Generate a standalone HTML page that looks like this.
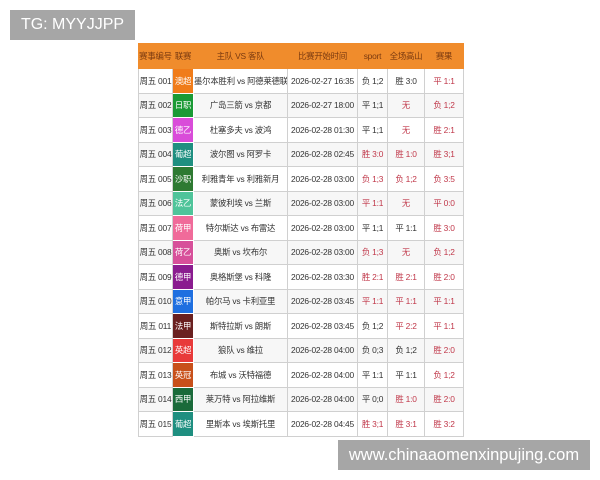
<!DOCTYPE html>
<html><head><meta charset="utf-8"><style>
body{margin:0;width:600px;height:480px;background:#fff;position:relative;overflow:hidden;font-family:"Liberation Sans","Noto Sans CJK SC",sans-serif}
.b1{position:absolute;left:10px;top:10px;width:125px;height:30px;background:#a6a6a6;color:#fff;font-size:16px;line-height:30px;text-align:center}
.b2{position:absolute;left:338px;top:440px;width:252px;height:30px;background:#a6a6a6;color:#fff;font-size:16.5px;line-height:30px;text-align:center}
table{position:absolute;left:138px;top:43px;width:325px;border-collapse:collapse;font-size:8.4px;letter-spacing:-0.2px;color:#333;table-layout:fixed}
td,th{border:1px solid #d0d0d0;padding:0;text-align:center;white-space:nowrap;overflow:hidden;height:23.5px}
th{background:#f08c2c;color:#7a3a10;font-weight:normal;height:24px;border-color:#f08c2c}
tr:nth-child(odd) td{background:#f7f7f7}
td.l{color:#fff;border-color:transparent}
.r{color:#c0384a}
</style></head><body>
<div class="b1">TG: MYYJJPP</div>
<table>
<colgroup><col style="width:34px"><col style="width:21px"><col style="width:94px"><col style="width:70px"><col style="width:30px"><col style="width:37px"><col style="width:39px"></colgroup>
<tr><th>赛事编号</th><th>联赛</th><th>主队 VS 客队</th><th>比赛开始时间</th><th>sport</th><th>全场高山</th><th>赛果</th></tr>
<tr><td>周五 001</td><td class="l" style="background:#f07c1a">澳超</td><td>墨尔本胜利 vs 阿德莱德联</td><td>2026-02-27 16:35</td><td>负 1;2</td><td>胜 3:0</td><td class="r">平 1:1</td></tr>
<tr><td>周五 002</td><td class="l" style="background:#1a9a35">日职</td><td>广岛三箭 vs 京都</td><td>2026-02-27 18:00</td><td>平 1;1</td><td class="r">无</td><td class="r">负 1;2</td></tr>
<tr><td>周五 003</td><td class="l" style="background:#d94cd9">德乙</td><td>杜塞多夫 vs 波鸿</td><td>2026-02-28 01:30</td><td>平 1;1</td><td class="r">无</td><td class="r">胜 2:1</td></tr>
<tr><td>周五 004</td><td class="l" style="background:#1f8f80">葡超</td><td>波尔图 vs 阿罗卡</td><td>2026-02-28 02:45</td><td class="r">胜 3:0</td><td class="r">胜 1:0</td><td class="r">胜 3;1</td></tr>
<tr><td>周五 005</td><td class="l" style="background:#2e7a32">沙职</td><td>利雅青年 vs 利雅新月</td><td>2026-02-28 03:00</td><td class="r">负 1;3</td><td class="r">负 1;2</td><td class="r">负 3:5</td></tr>
<tr><td>周五 006</td><td class="l" style="background:#4fc49a">法乙</td><td>蒙彼利埃 vs 兰斯</td><td>2026-02-28 03:00</td><td class="r">平 1:1</td><td class="r">无</td><td class="r">平 0:0</td></tr>
<tr><td>周五 007</td><td class="l" style="background:#f06b9a">荷甲</td><td>特尔斯达 vs 布雷达</td><td>2026-02-28 03:00</td><td>平 1;1</td><td>平 1:1</td><td class="r">胜 3:0</td></tr>
<tr><td>周五 008</td><td class="l" style="background:#d7509a">荷乙</td><td>奥斯 vs 坎布尔</td><td>2026-02-28 03:00</td><td class="r">负 1;3</td><td class="r">无</td><td class="r">负 1;2</td></tr>
<tr><td>周五 009</td><td class="l" style="background:#8a1c8f">德甲</td><td>奥格斯堡 vs 科隆</td><td>2026-02-28 03:30</td><td class="r">胜 2:1</td><td class="r">胜 2:1</td><td class="r">胜 2:0</td></tr>
<tr><td>周五 010</td><td class="l" style="background:#1f6fe0">意甲</td><td>帕尔马 vs 卡利亚里</td><td>2026-02-28 03:45</td><td class="r">平 1:1</td><td class="r">平 1:1</td><td class="r">平 1:1</td></tr>
<tr><td>周五 011</td><td class="l" style="background:#6a2020">法甲</td><td>斯特拉斯 vs 朗斯</td><td>2026-02-28 03:45</td><td>负 1;2</td><td class="r">平 2:2</td><td class="r">平 1:1</td></tr>
<tr><td>周五 012</td><td class="l" style="background:#e83a3a">英超</td><td>狼队 vs 维拉</td><td>2026-02-28 04:00</td><td>负 0;3</td><td>负 1;2</td><td class="r">胜 2:0</td></tr>
<tr><td>周五 013</td><td class="l" style="background:#c8501a">英冠</td><td>布城 vs 沃特福德</td><td>2026-02-28 04:00</td><td>平 1:1</td><td>平 1:1</td><td class="r">负 1;2</td></tr>
<tr><td>周五 014</td><td class="l" style="background:#1a6a3a">西甲</td><td>莱万特 vs 阿拉维斯</td><td>2026-02-28 04:00</td><td>平 0;0</td><td class="r">胜 1:0</td><td class="r">胜 2:0</td></tr>
<tr><td>周五 015</td><td class="l" style="background:#1f8f80">葡超</td><td>里斯本 vs 埃斯托里</td><td>2026-02-28 04:45</td><td class="r">胜 3;1</td><td class="r">胜 3:1</td><td class="r">胜 3:2</td></tr>
</table>
<div class="b2">www.chinaaomenxinpujing.com</div>
</body></html>
